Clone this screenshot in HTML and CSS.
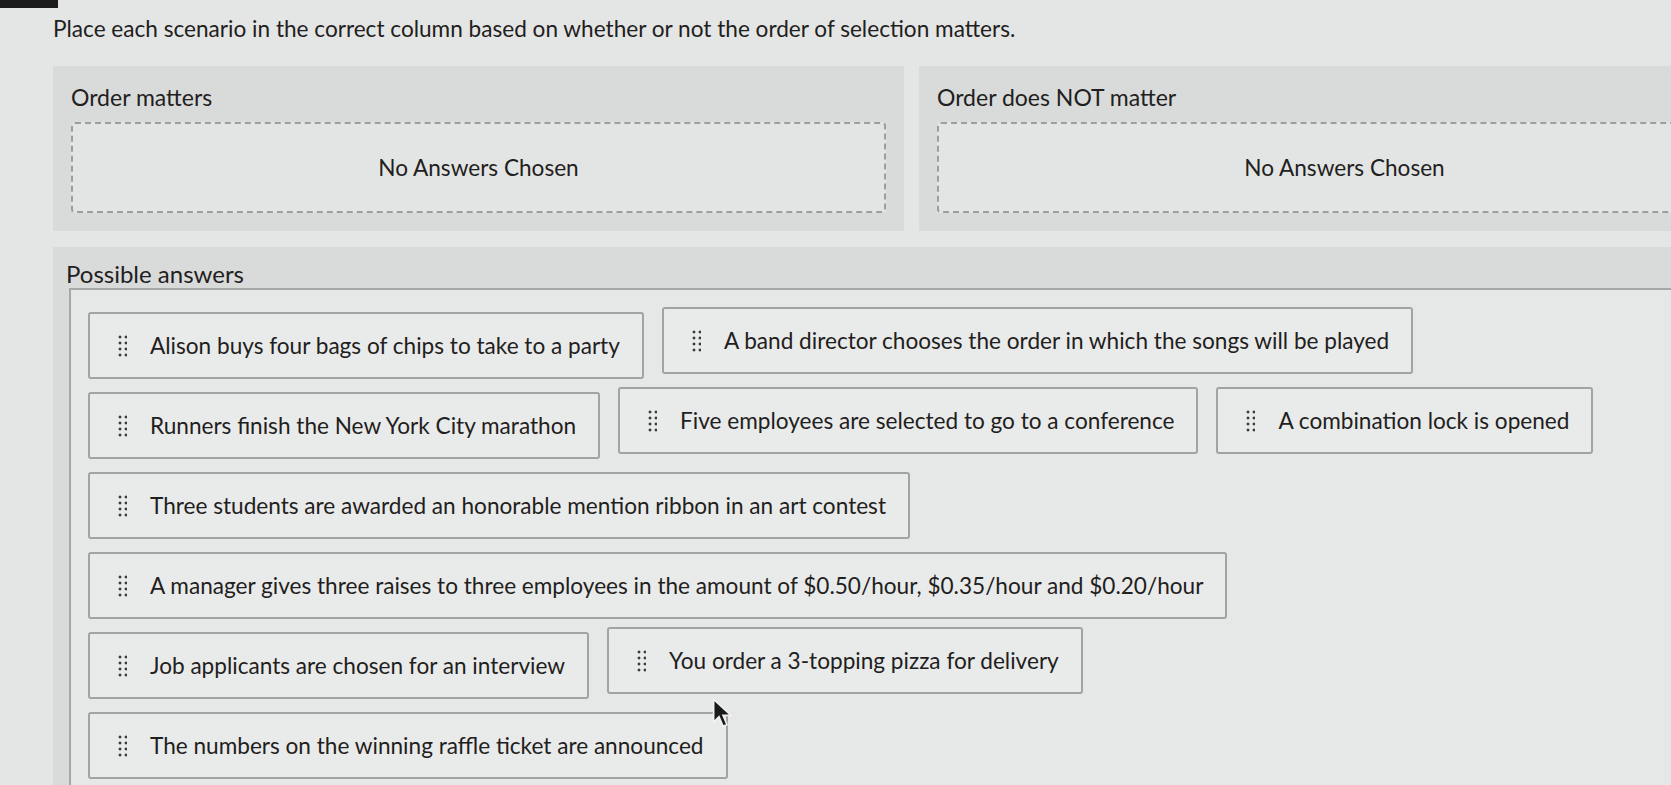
FILE: index.html
```html
<!DOCTYPE html>
<html lang="en">
<head>
    <meta charset="UTF-8">
    <title>Order of selection</title>
    <link rel="stylesheet" href="styles.css">
</head>
<body>
<div class="corner"></div>
<div class="page">
    <p class="prompt">Place each scenario in the correct column based on whether or not the order of selection matters.</p>

    <!-- drop targets -->
    <div class="columns">
        <div class="column">
            <div class="column-title">Order matters</div>
            <div class="dropzone">No Answers Chosen</div>
        </div>
        <div class="column">
            <div class="column-title">Order does NOT matter</div>
            <div class="dropzone">No Answers Chosen</div>
        </div>
    </div>

    <!-- answer bank -->
    <div class="bank">
        <div class="bank-title">Possible answers</div>
        <div class="bank-body">
            <div class="row">
                <div class="card"><span class="handle"></span>Alison buys four bags of chips to take to a party</div>
                <div class="card up"><span class="handle"></span>A band director chooses the order in which the songs will be played</div>
            </div>
            <div class="row">
                <div class="card"><span class="handle"></span>Runners finish the New York City marathon</div>
                <div class="card up"><span class="handle"></span>Five employees are selected to go to a conference</div>
                <div class="card up"><span class="handle"></span>A combination lock is opened</div>
            </div>
            <div class="row">
                <div class="card"><span class="handle"></span>Three students are awarded an honorable mention ribbon in an art contest</div>
            </div>
            <div class="row">
                <div class="card"><span class="handle"></span>A manager gives three raises to three employees in the amount of $0.50/hour, $0.35/hour and $0.20/hour</div>
            </div>
            <div class="row">
                <div class="card"><span class="handle"></span>Job applicants are chosen for an interview</div>
                <div class="card up"><span class="handle"></span>You order a 3-topping pizza for delivery</div>
            </div>
            <div class="row">
                <div class="card"><span class="handle"></span>The numbers on the winning raffle ticket are announced</div>
            </div>
        </div>
    </div>
</div>

<svg class="pointer" width="22" height="32" viewBox="0 0 16 24">
    <path d="M1 1 L1 18 L5 14 L8 21 L11 20 L8 13 L14 13 Z" fill="#1a1a1a" stroke="#f2f2f2" stroke-width="1.2"/>
</svg>
</body>
</html>
```

FILE: styles.css
```css
html {
    overflow: hidden;
}

body {
    margin: 0;
    background: #e4e6e5;
    font-family: Lato, "Open Sans", sans-serif;
    color: #1f2020;
    position: relative;
    height: 785px;
}

.corner {
    width: 58px;
    height: 8px;
    background: #1c1c1c;
}

.page {
    padding-left: 53px;
}

.prompt {
    margin: 7px 0 0;
    font-size: 22.6px;
    line-height: 27px;
}

/* two target columns */
.columns {
    display: flex;
    gap: 15px;
    margin-top: 24px;
    width: 1700px;
}

.column {
    width: 815px;
    flex: none;
    background: #d9dbdb;
    padding: 17px 18px 18px 18px;
}

.column-title {
    font-size: 23px;
    line-height: 28px;
    margin-bottom: 11px;
}

.dropzone {
    height: 87px;
    border: 2px dashed #9d9e9e;
    border-radius: 4px;
    background: #e3e5e5;
    display: flex;
    align-items: center;
    justify-content: center;
    font-size: 22.6px;
}

/* possible answers */
.bank {
    margin-top: 16px;
    background: #d9dbdb;
    padding-top: 12px;
}

.bank-title {
    font-size: 24px;
    line-height: 29px;
    padding-left: 13px;
}

.bank-body {
    margin-left: 16px;
    border-top: 2px solid #a6a8a8;
    border-left: 2px solid #a6a8a8;
    background: #e6e8e7;
    padding: 22px 0 30px 17px;
    display: flex;
    flex-direction: column;
    gap: 13px;
}

.row {
    display: flex;
    gap: 18px;
    align-items: flex-start;
}

.card {
    height: 63px;
    display: flex;
    align-items: center;
    gap: 23px;
    padding: 0 22px 0 28px;
    border: 2px solid #a2a4a4;
    border-radius: 3px;
    background: #e9ebea;
    font-size: 22.6px;
    white-space: nowrap;
}

.card.up {
    margin-top: -5px;
}

/* drag grip: 2 x 4 dots */
.handle {
    width: 9px;
    height: 24px;
    flex: none;
    background-image: radial-gradient(circle, #3a3a3a 1.3px, transparent 1.7px);
    background-size: 6px 6px;
    background-position: -1px 0;
}

.pointer {
    position: absolute;
    left: 712px;
    top: 698px;
}
```
